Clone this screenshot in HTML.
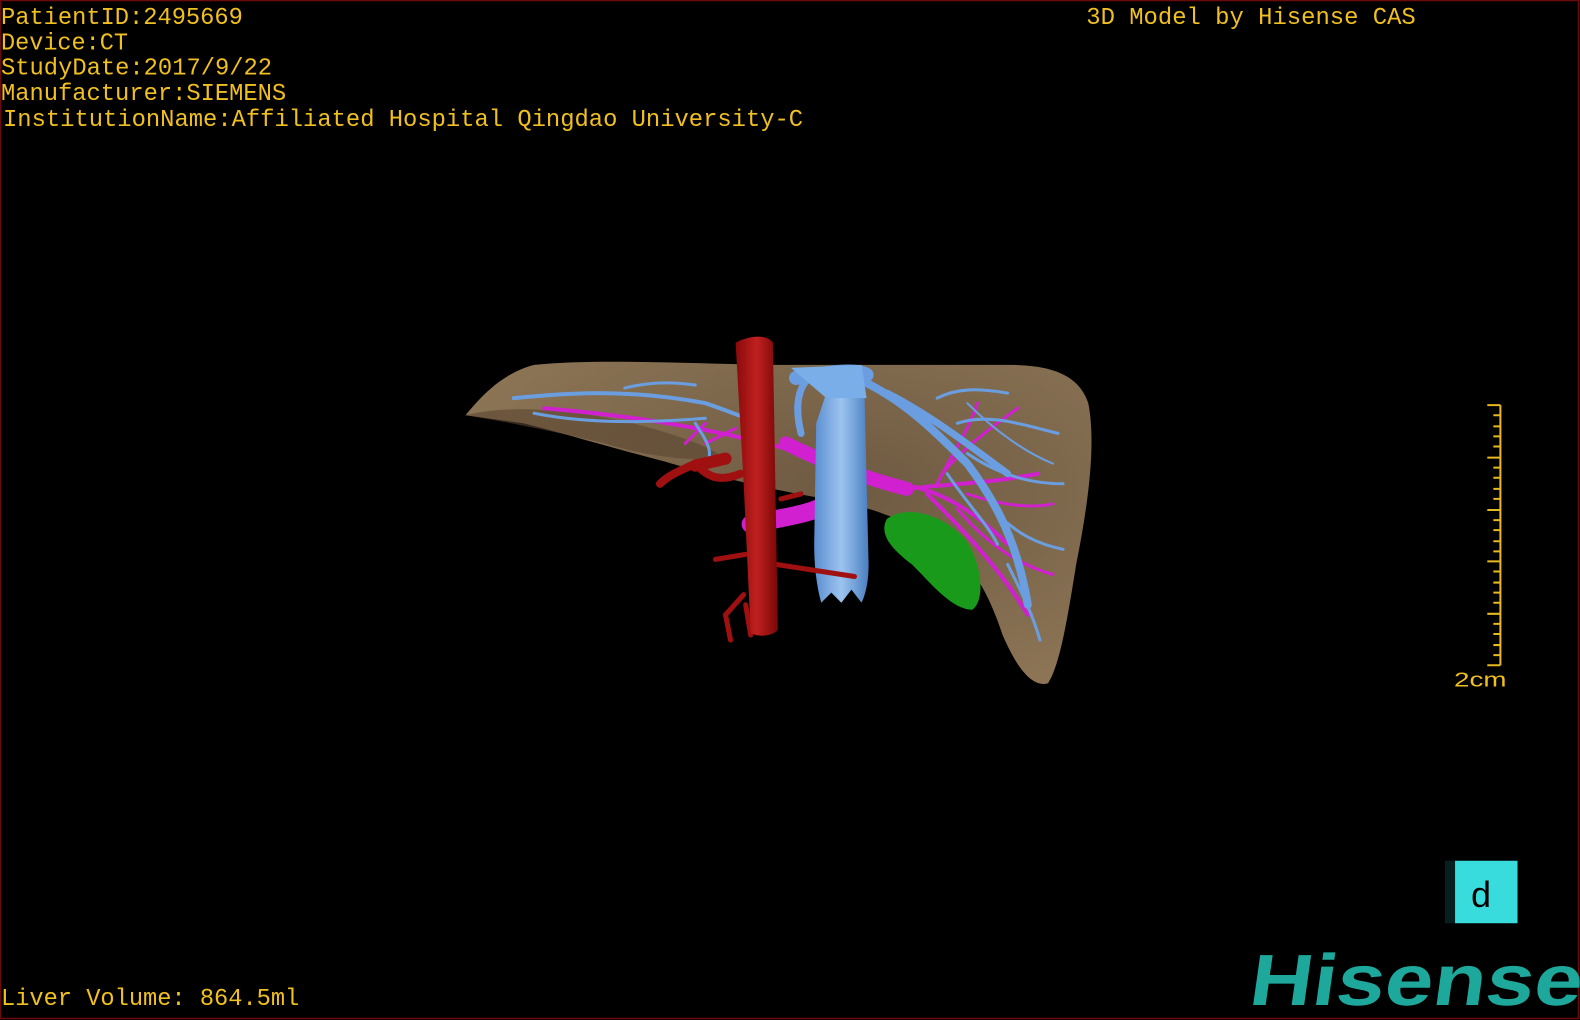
<!DOCTYPE html>
<html><head><meta charset="utf-8"><style>
html,body{margin:0;padding:0;background:#000;width:1580px;height:1020px;overflow:hidden}
svg{display:block}
</style></head><body>
<svg width="1580" height="1020" viewBox="0 0 1568 1012" preserveAspectRatio="none" xmlns="http://www.w3.org/2000/svg">
<rect x="0" y="0" width="1568" height="1012" fill="#000"/>
<rect x="0.5" y="0.5" width="1566" height="1010" fill="none" stroke="#6a0a0a" stroke-width="1.5"/>
<g font-family="Liberation Mono, monospace" font-size="24" fill="#f0c020">
<text x="1" y="24" textLength="240" lengthAdjust="spacingAndGlyphs">PatientID:2495669</text>
<text x="1" y="49" textLength="126" lengthAdjust="spacingAndGlyphs">Device:CT</text>
<text x="1" y="74" textLength="269" lengthAdjust="spacingAndGlyphs">StudyDate:2017/9/22</text>
<text x="1" y="99" textLength="283" lengthAdjust="spacingAndGlyphs">Manufacturer:SIEMENS</text>
<text x="3" y="125" textLength="794" lengthAdjust="spacingAndGlyphs">InstitutionName:Affiliated Hospital Qingdao University-C</text>
<text x="1078" y="24" textLength="327" lengthAdjust="spacingAndGlyphs">3D Model by Hisense CAS</text>
<text x="1" y="997" textLength="296" lengthAdjust="spacingAndGlyphs">Liver Volume: 864.5ml</text>
<text x="1443" y="681" font-family="Liberation Sans, sans-serif" font-size="20" textLength="52" lengthAdjust="spacingAndGlyphs">2cm</text>
</g>
<g stroke="#e8b820" stroke-width="2">
<line x1="1489" y1="402" x2="1489" y2="660"/>
<path d="M1476 402H1489M1482 412H1489M1482 423H1489M1482 433H1489M1482 443H1489M1476 454H1489M1482 464H1489M1482 474H1489M1482 485H1489M1482 495H1489M1476 506H1489M1482 516H1489M1482 526H1489M1482 537H1489M1482 547H1489M1476 557H1489M1482 567H1489M1482 578H1489M1482 588H1489M1482 598H1489M1476 609H1489M1482 619H1489M1482 629H1489M1482 640H1489M1482 650H1489M1476 660H1489"/>
</g>
<rect x="1434" y="854" width="10" height="62" fill="#062020"/>
<rect x="1444" y="854" width="62" height="62" fill="#38dcdc"/>
<text x="1459" y="900" font-family="Liberation Mono, monospace" font-size="36" fill="#000">d</text>
<text x="1238" y="997" font-family="Liberation Sans, sans-serif" font-weight="bold" font-size="72" fill="#1ea89c" textLength="330" lengthAdjust="spacingAndGlyphs" transform="skewX(-8) translate(140,0)">Hisense</text>
<defs>
<radialGradient id="lv" cx="0.6" cy="0.4" r="0.7"><stop offset="0" stop-color="#6e5a42"/><stop offset="1" stop-color="#8e7656"/></radialGradient>
<linearGradient id="ivc" x1="0" x2="1"><stop offset="0" stop-color="#5a8ed0"/><stop offset="0.5" stop-color="#9cc4f0"/><stop offset="1" stop-color="#4a7ec0"/></linearGradient>
<linearGradient id="ao" x1="0" x2="1"><stop offset="0" stop-color="#8a0a0a"/><stop offset="0.5" stop-color="#c02020"/><stop offset="1" stop-color="#7a0606"/></linearGradient>
</defs>
<path d="M462 412 C480 390 500 370 530 362 C600 355 700 362 790 362 L1000 362 C1040 362 1070 370 1080 400 C1088 440 1080 500 1068 560 C1060 610 1052 660 1040 678 C1025 682 1010 665 995 630 C985 600 975 580 960 560 C930 530 880 505 820 495 C760 485 700 470 660 458 C610 445 560 430 520 420 Z" fill="url(#lv)"/>
<path d="M462 412 C500 402 560 405 620 418 C660 428 700 440 720 455 C680 458 640 452 600 440 C560 430 500 418 462 412Z" fill="#5a4430" opacity="0.6"/>
<path d="M880 515 C900 500 935 510 958 535 C975 560 978 595 965 605 C945 605 925 580 905 560 C885 545 872 530 880 515Z" fill="#1a9a1a"/>
<g stroke="#d020d0" fill="none" stroke-linecap="round">
<path d="M540 405 C600 410 680 420 760 440 C820 455 860 470 880 480 C920 480 960 500 1000 540" stroke-width="4"/>
<path d="M780 440 C820 460 860 475 900 485" stroke-width="14"/>
<path d="M745 520 C770 515 800 510 810 505" stroke-width="18"/>
<path d="M900 485 C940 480 980 480 1030 470" stroke-width="4"/>
<path d="M920 490 C950 520 990 560 1020 610" stroke-width="4"/>
<path d="M935 470 C960 440 990 420 1010 405" stroke-width="3"/>
<path d="M960 490 C990 500 1020 505 1045 500" stroke-width="3"/>
<path d="M950 505 C980 540 1010 560 1045 570" stroke-width="3"/>
<path d="M930 480 C945 450 960 430 970 400" stroke-width="3"/>
<path d="M680 440 L700 420 M700 440 L730 425" stroke-width="3"/>
</g>
<g stroke="#6a9ee0" fill="none" stroke-linecap="round">
<path d="M510 395 C560 390 620 385 700 400 C730 410 750 420 760 420" stroke-width="4"/>
<path d="M530 410 C580 420 640 420 700 415" stroke-width="3"/>
<path d="M620 385 C640 380 660 378 690 382" stroke-width="3"/>
<path d="M690 420 C700 435 710 450 700 460" stroke-width="3"/>
<path d="M790 375 C820 370 850 365 860 372" stroke-width="14"/>
<path d="M800 378 C790 390 790 410 795 430" stroke-width="7"/>
<path d="M860 380 C900 400 930 430 960 460 C990 500 1010 540 1020 600" stroke-width="8"/>
<path d="M880 390 C920 410 960 440 1000 470" stroke-width="7"/>
<path d="M950 420 C980 410 1010 420 1050 430" stroke-width="3"/>
<path d="M960 450 C990 470 1020 480 1055 480" stroke-width="3"/>
<path d="M990 510 C1010 530 1030 540 1055 545" stroke-width="3"/>
<path d="M1000 560 C1015 590 1025 610 1032 635" stroke-width="3"/>
<path d="M930 395 C950 385 970 385 1000 390" stroke-width="3"/>
<path d="M940 470 C960 500 980 520 990 540" stroke-width="3"/>
<path d="M960 400 C990 430 1020 450 1045 460" stroke-width="2"/>
</g>
<path d="M820 390 C835 380 850 385 858 395 L862 560 C862 580 858 592 855 598 L845 585 L835 598 L825 588 L815 598 C810 580 808 560 808 540 L810 420 Z" fill="url(#ivc)"/>
<path d="M785 365 L855 362 L860 395 L820 395 Z" fill="#7aaee8"/>
<g stroke="#a01010" fill="none" stroke-linecap="round">
<path d="M735 470 C710 480 700 470 690 460 C680 465 665 470 655 480" stroke-width="8"/>
<path d="M720 455 L690 462" stroke-width="12"/>
<path d="M740 550 L710 555 M770 560 L848 572 M738 590 L720 610 L725 635 M740 600 L745 630 M775 495 L795 490" stroke-width="5"/>
</g>
<path d="M730 340 C745 332 762 332 767 340 L772 625 C765 632 752 632 745 628 L738 480 Z" fill="url(#ao)"/>
</svg>
</body></html>
